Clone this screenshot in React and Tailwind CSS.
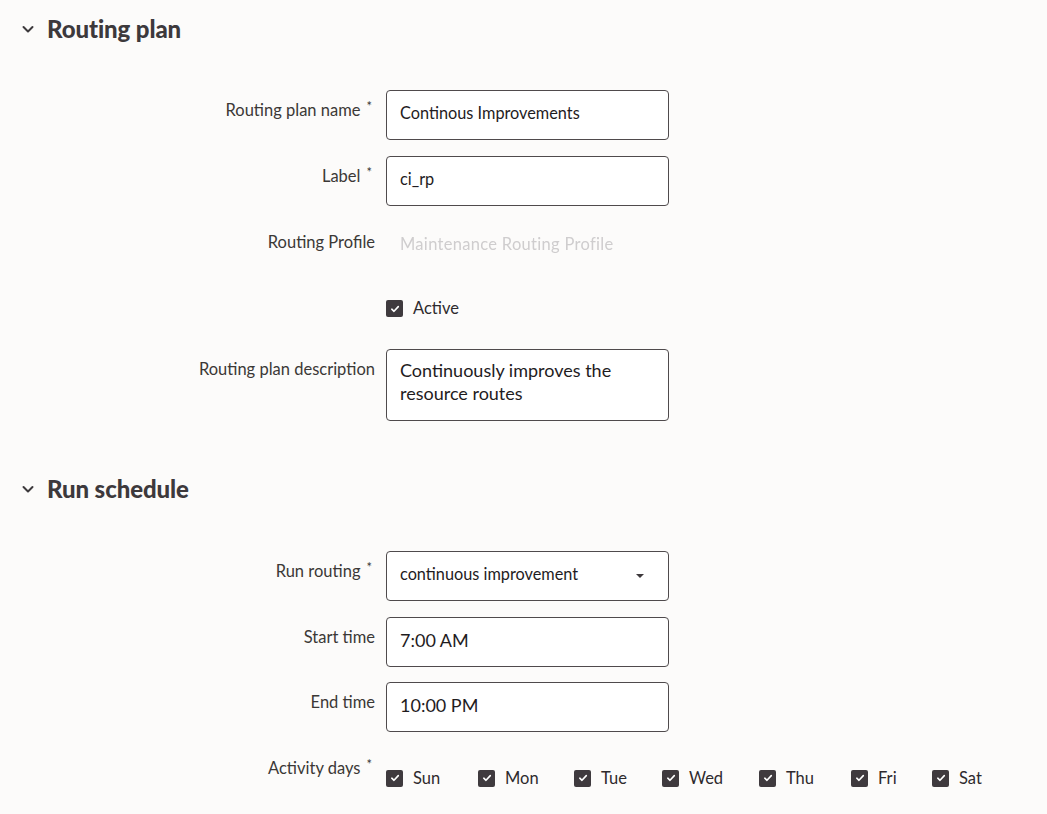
import React from "react";

const font = { fontFamily: "Lato, 'Noto Sans', sans-serif" };

function Chevron() {
  return (
    <svg width="14" height="14" viewBox="0 0 14 14" className="shrink-0">
      <path d="M2.5 5 L7 9.5 L11.5 5" fill="none" stroke="#3d393c" strokeWidth="2" strokeLinecap="round" strokeLinejoin="round" />
    </svg>
  );
}

function Check() {
  return (
    <span className="flex h-[17px] w-[17px] shrink-0 items-center justify-center rounded-[2px] bg-[#3f3a3e]">
      <svg width="10" height="10" viewBox="0 0 10 10">
        <path d="M1.8 5.2 L4 7.3 L8.3 2.6" fill="none" stroke="#ffffff" strokeWidth="1.6" strokeLinecap="round" strokeLinejoin="round" />
      </svg>
    </span>
  );
}

function Label({ text, required }) {
  return (
    <div className="flex justify-end pr-[11px] pt-[10px] text-[16.5px] leading-5 text-[#3b3836]">
      <span>{text}</span>
      {required ? <span className="ml-[6px] mr-[3px] -mt-[4px] text-[13px] text-[#3b3836]">*</span> : <span className="w-0" />}
    </div>
  );
}

function Box({ children, big, tall }) {
  return (
    <div
      className={
        "w-[283px] rounded-[4px] border border-[#4f4a4c] bg-white px-[13px] text-[#1f1c1e] " +
        (tall ? "h-[72px] pt-[9px] " : "flex h-[50px] items-center pb-[3px] ") +
        (big ? "text-[18px] leading-[23px]" : "text-[16.3px]")
      }
    >
      {children}
    </div>
  );
}

function Row({ label, required, children, className = "" }) {
  return (
    <div className={"grid grid-cols-[386px_1fr] " + className}>
      <Label text={label} required={required} />
      <div>{children}</div>
    </div>
  );
}

function Header({ title }) {
  return (
    <div className="flex h-[58px] items-center gap-[12px] pl-[21px]">
      <Chevron />
      <h2 className="-mt-[1px] text-[24px] font-black tracking-[-0.1px] text-[#3d393c]">{title}</h2>
    </div>
  );
}

export default function App() {
  const days = [
    ["Sun", "w-[92px]"],
    ["Mon", "w-[96px]"],
    ["Tue", "w-[88px]"],
    ["Wed", "w-[97px]"],
    ["Thu", "w-[92px]"],
    ["Fri", "w-[81px]"],
    ["Sat", "w-[70px]"],
  ];
  return (
    <div className="min-h-[814px] w-[1047px] bg-[#fcfbfa]" style={font}>
      <Header title="Routing plan" />
      <div className="mt-[32px] flex flex-col gap-[16px]">
        <Row label="Routing plan name" required>
          <Box>Continous Improvements</Box>
        </Row>
        <Row label="Label" required>
          <Box>ci_rp</Box>
        </Row>
        <Row label="Routing Profile">
          <div className="flex h-[50px] items-start pl-[14px] pt-[10px] text-[16.5px] tracking-[0.3px] text-[#cfcdce] blur-[0.7px]">
            Maintenance Routing Profile
          </div>
        </Row>
        <div className="grid h-[45px] grid-cols-[386px_1fr]">
          <div />
          <div className="flex items-start gap-[10px] pt-[12px]">
            <Check />
            <span className="-mt-[4px] text-[16.5px] text-[#2e2a2d]">Active</span>
          </div>
        </div>
        <Row label="Routing plan description">
          <Box big tall>
            Continuously improves the
            <br />
            resource routes
          </Box>
        </Row>
      </div>
      <div className="mt-[39px]">
        <Header title="Run schedule" />
        <div className="mt-[33px] flex flex-col gap-[16px]">
          <Row label="Run routing" required>
            <Box>
              <span className="flex-1">continuous improvement</span>
              <svg width="10" height="6" viewBox="0 0 10 6" className="mr-[10px] mt-[3px]">
                <path d="M1 1 L9 1 L5 5 Z" fill="#3d393c" />
              </svg>
            </Box>
          </Row>
          <Row label="Start time">
            <Box big>7:00 AM</Box>
          </Row>
          <Row label="End time" className="-mt-[1px]">
            <Box big>10:00 PM</Box>
          </Row>
          <Row label="Activity days" required>
            <div className="flex items-center pt-[18px]">
              {days.map(([d, w]) => (
                <div key={d} className={"flex items-center gap-[10px] " + w}>
                  <Check />
                  <span className="text-[16.5px] text-[#2e2a2d]">{d}</span>
                </div>
              ))}
            </div>
          </Row>
        </div>
      </div>
    </div>
  );
}
